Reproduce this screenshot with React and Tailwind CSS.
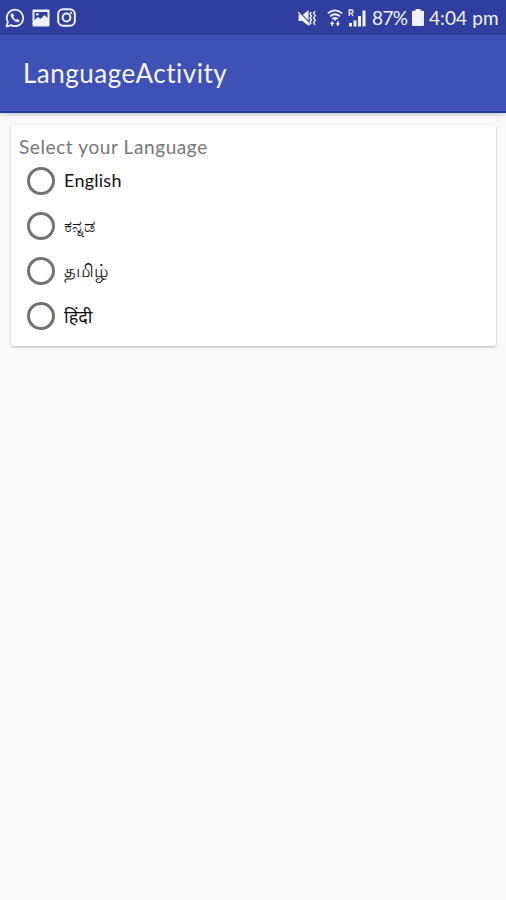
import { useState } from "react";

const languages = [
  { id: "en", label: "English", className: "text-[18px] tracking-[0.25px]" },
  { id: "kn", label: "ಕನ್ನಡ", className: "text-[18px]" },
  { id: "ta", label: "தமிழ்", className: "text-[18px]" },
  { id: "hi", label: "हिंदी", className: "text-[18px]" },
];

function WhatsappIcon() {
  return (
    <svg className="w-5 h-5" viewBox="0 0 20 20" fill="none" stroke="currentColor">
      <path d="M1.5 18.5l1.3-4.6a8.2 8.2 0 1 1 3.2 3.2z" strokeWidth="1.8" strokeLinejoin="round" />
      <path
        d="M7.4 5.4l-1.5.9c-.7 3 3.9 8 7.3 7.7l1.4-1.4-2.4-1.7-1.2 1c-1.2-.5-2.4-1.7-2.9-2.9l.9-1.2z"
        fill="currentColor"
        strokeWidth="0.4"
      />
    </svg>
  );
}

function GalleryIcon() {
  return (
    <svg className="w-[18px] h-[18px]" viewBox="0 0 18 18">
      <path
        fill="currentColor"
        fillRule="evenodd"
        d="M1.5 0.5h15a1 1 0 0 1 1 1v15a1 1 0 0 1-1 1h-15a1 1 0 0 1-1-1v-15a1 1 0 0 1 1-1zM2.5 3v8l3.5-3 2.5 2 4-4 3 3V3z"
      />
      <circle cx="5.3" cy="5.3" r="1.3" fill="currentColor" />
    </svg>
  );
}

function InstagramIcon() {
  return (
    <svg className="w-[19px] h-[19px]" viewBox="0 0 19 19" fill="none" stroke="currentColor">
      <rect x="1.2" y="1.2" width="16.6" height="16.6" rx="4.8" strokeWidth="2" />
      <circle cx="9.5" cy="9.5" r="3.9" strokeWidth="2" />
      <circle cx="14.1" cy="4.9" r="1.1" fill="currentColor" stroke="none" />
    </svg>
  );
}

function VibrateIcon() {
  return (
    <svg className="w-[19px] h-[18px]" viewBox="0 0 19 18" fill="currentColor">
      <path d="M0.5 6h4l6-5v16l-6-5h-4z" />
      <path d="M0.5 2l12 13" stroke="#303f9f" strokeWidth="1.2" />
      <path d="M0 3l12 13" stroke="currentColor" strokeWidth="1.2" />
      <path
        d="M13.2 3l-1.2 2 1.5 2-1.5 2 1.5 2-1.5 2 1.2 2M17 2l-1.4 2.3L17.3 6.600l-1.700 2.300 1.700 2.300-1.700 2.300L17 16"
        fill="none"
        stroke="currentColor"
        strokeWidth="1.4"
      />
    </svg>
  );
}

function WifiIcon() {
  return (
    <svg className="w-4 h-[18px]" viewBox="0 0 16 18" fill="none" stroke="currentColor">
      <path d="M0.800 4.300Q8 -1.500 15.200 4.300M3 7.300Q8 3.200 13 7.300M5.200 9.900Q8 7.700 10.800 9.900" strokeWidth="1.700" />
      <path d="M8 12L6 9.500h4z" fill="currentColor" stroke="none" />
      <path d="M5.200 12l2.200 3H6v2H4.400v-2H3zM10.800 17.200l-2.200-3H10v-2h1.600v2H13z" fill="currentColor" stroke="none" />
    </svg>
  );
}

function SignalIcon() {
  return (
    <svg className="w-[18px] h-[18px]" viewBox="0 0 18 18" fill="currentColor">
      <path d="M1.200 7V1h2.300a1.500 1.500 0 0 1 0 3.200H1.200M3.300 4.200L5 7" fill="none" stroke="currentColor" strokeWidth="1.300" />
      <path d="M1 14h3v3.500H1zM5.500 11.500h3v6h-3zM10 7h3v10.500h-3zM14.500 1.500h3v16h-3z" />
    </svg>
  );
}

function BatteryIcon() {
  return (
    <svg className="w-3 h-[17px]" viewBox="0 0 12 17" fill="currentColor">
      <path d="M3.500 0h5v1.700H11a1 1 0 0 1 1 1V16a1 1 0 0 1-1 1H1a1 1 0 0 1-1-1V2.700a1 1 0 0 1 1-1h2.500z" />
    </svg>
  );
}

function StatusBar() {
  return (
    <div className="h-[35px] bg-[#303f9f] text-[#f0f1ff] flex items-center justify-between pl-[5px] pr-[7px]">
      <div className="flex items-center gap-[7px]">
        <WhatsappIcon />
        <GalleryIcon />
        <InstagramIcon />
      </div>

      <div className="flex items-center text-[19px] leading-none whitespace-nowrap">
        <VibrateIcon />
        <span className="w-[10px]" />
        <WifiIcon />
        <span className="w-[5px]" />
        <SignalIcon />
        <span className="w-[37px] ml-[6px] tracking-[-0.6px]">87%</span>
        <span className="w-[3px]" />
        <BatteryIcon />
        <span className="w-[70px] ml-[5px] tracking-[0.1px]">4:04 pm</span>
      </div>
    </div>
  );
}

function App() {
  const [selected, setSelected] = useState("");

  return (
    <div className="min-h-screen bg-[#fafafa] font-['Lato','Noto_Sans',sans-serif]">
      <StatusBar />

      {/* TOOLBAR */}
      <header className="h-[78px] bg-[#3f51b5] border-b-2 border-[#1c3d9c] shadow-[0_2px_4px_rgba(0,0,0,0.18)] flex items-center pl-[23px]">
        <h1 className="text-[26px] leading-none tracking-[0.5px] text-[#f5f6ff]">LanguageActivity</h1>
      </header>

      {/* LANGUAGE CARD */}
      <main className="mt-3 ml-[11px] mr-[10px] h-[221px] bg-white rounded-[3px] shadow-[0_1px_3px_rgba(0,0,0,0.28)] pt-[11px] pl-2">
        <p className="h-[22px] text-[19px] leading-[22px] tracking-[0.6px] text-[#777777]">Select your Language</p>

        <div className="pl-2">
          {languages.map((lang) => (
            <label key={lang.id} className="h-[45.200px] flex items-center">
              <input
                type="radio"
                name="language"
                className="appearance-none w-7 h-7 rounded-full border-[3px] border-[#737373] checked:border-[9px] checked:border-[#ff4081]"
                checked={selected === lang.id}
                onChange={() => setSelected(lang.id)}
              />
              <span className={`ml-[9px] text-[#111111] ${lang.className}`}>{lang.label}</span>
            </label>
          ))}
        </div>
      </main>
    </div>
  );
}

export default App;
